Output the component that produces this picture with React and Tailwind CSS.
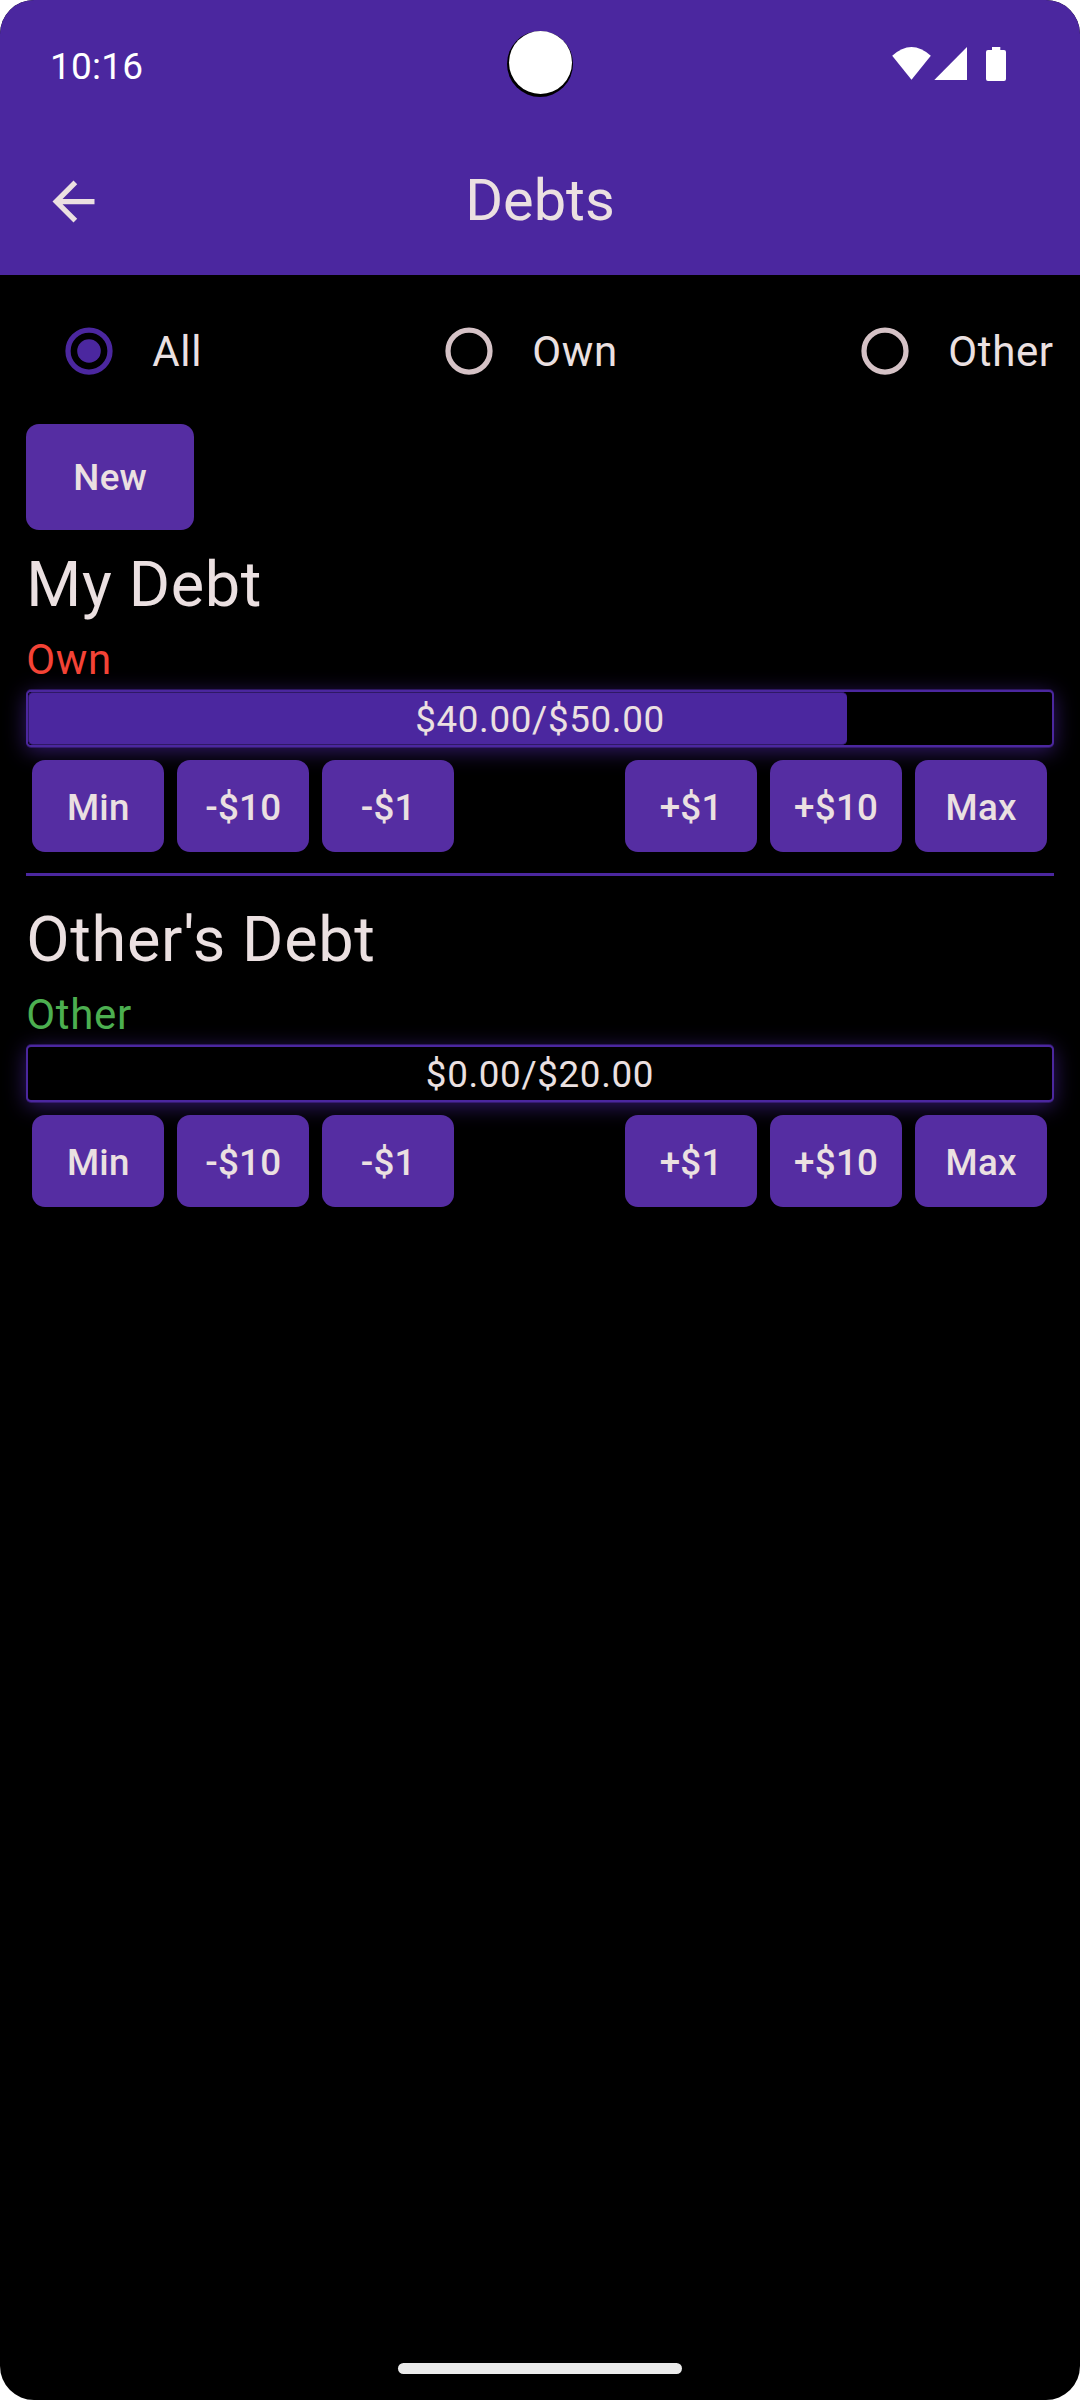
const DEBTS = [
  {
    title: "My Debt",
    kind: "Own",
    kindClass: "text-[#f44336]",
    label: "$40.00/$50.00",
    ratio: 0.8,
  },
  {
    title: "Other's Debt",
    kind: "Other",
    kindClass: "text-[#4caf50]",
    label: "$0.00/$20.00",
    ratio: 0,
  },
];

function StatusBar() {
  return (
    <div className="relative flex h-[128px] items-center justify-between pl-[50px] pr-[72px]">
      <span className="mt-[6px] text-[37px] leading-[44px] tracking-[0.2px] text-white">10:16</span>
      <svg className="h-[36px] w-[118px]" viewBox="890 46 118 36" fill="#fff">
        <path d="M892.2 55.8Q911.5 38.3 930.8 55.8L911.5 79.8Z" />
        <path d="M967 47V80H934.3Z" />
        <path d="M992 47H1000.3V50H1004a2 2 0 0 1 2 2V79a2 2 0 0 1-2 2H988a2 2 0 0 1-2-2V52a2 2 0 0 1 2-2H992Z" />
      </svg>
      <div className="absolute left-[507px] top-[31px] flex h-[66px] w-[66px] justify-center rounded-full bg-black">
        <div className="ml-[1px] h-[63px] w-[63px] rounded-full bg-white" />
      </div>
    </div>
  );
}

function AppBar() {
  return (
    <div className="grid h-[147px] grid-cols-[147px_1fr_147px] items-center">
      <button className="ml-[42px] h-[63px] w-[63px]" aria-label="Back">
        <svg viewBox="0 0 24 24" className="h-[63px] w-[63px]" fill="currentColor">
          <path d="M20 11H7.83l5.59-5.59L12 4l-8 8 8 8 1.41-1.41L7.83 13H20v-2z" />
        </svg>
      </button>
      <h1 className="mb-[2px] text-center text-[57.75px] leading-[73px]">Debts</h1>
    </div>
  );
}

function RadioOption({ label, selected }) {
  return (
    <div className="flex h-[126px] items-center">
      <div className="flex w-[126px] justify-center">
        <svg
          viewBox="0 0 48 48"
          className={selected ? "h-[48px] w-[48px] text-[#4b279f]" : "h-[48px] w-[48px] text-[#d5c2c6]"}
        >
          <circle cx="24" cy="24" r="21" fill="none" stroke="currentColor" strokeWidth="5.25" />
          {selected && <circle cx="24" cy="24" r="11.8" fill="currentColor" />}
        </svg>
      </div>
      <span className="text-[42px] leading-[63px] tracking-[0.66px]">{label}</span>
    </div>
  );
}

function StepButton({ children }) {
  return (
    <button className="h-[92px] w-[132px] rounded-[13px] bg-[#552da2] pt-[3px] text-[36.75px] font-medium leading-[52px] tracking-[0.26px]">
      {children}
    </button>
  );
}

function ProgressBar({ ratio, label }) {
  return (
    <div className="grid h-[57px] grid-cols-1 rounded-[5px] border-2 border-[#4b279f] bg-black shadow-[0_1px_0_rgba(75,39,160,0.5),0_-1px_0_rgba(75,39,160,0.5),0_4px_21px_rgba(75,39,160,0.65)]">
      {ratio > 0 && (
        <div
          className="col-start-1 row-start-1 h-full rounded-[5px] border-y border-l border-[#2f1966] bg-[#4b279f]"
          style={{ width: `${ratio * 100}%` }}
        />
      )}
      <span className="col-start-1 row-start-1 self-center pt-[3px] text-center text-[36.75px] leading-[50px] tracking-[0.66px]">
        {label}
      </span>
    </div>
  );
}

function Debt({ title, kind, kindClass, label, ratio }) {
  return (
    <section>
      <h2 className="text-[63px] leading-[84px] tracking-[0.66px]">{title}</h2>
      <p className={`h-[63px] text-[42px] leading-[65px] tracking-[0.66px] ${kindClass}`}>{kind}</p>
      <ProgressBar ratio={ratio} label={label} />
      <div className="mt-[13px] flex justify-between pl-[6px] pr-[6.6px]">
        <div className="flex gap-[13px]">
          <StepButton>Min</StepButton>
          <StepButton>-$10</StepButton>
          <StepButton>-$1</StepButton>
        </div>
        <div className="flex gap-[13px]">
          <StepButton>+$1</StepButton>
          <StepButton>+$10</StepButton>
          <StepButton>Max</StepButton>
        </div>
      </div>
    </section>
  );
}

export default function App() {
  return (
    <div className="h-[2400px] w-[1080px] bg-white">
      <div className="flex h-full w-full flex-col overflow-hidden rounded-[34px] bg-black font-['Roboto',sans-serif] text-[#ebe0e1]">
        <header className="bg-[#4b279f]">
          <StatusBar />
          <AppBar />
        </header>
        <main className="flex-1 px-[26.25px] pt-[13px]">
          <div className="flex justify-between">
            <RadioOption label="All" selected />
            <RadioOption label="Own" />
            <RadioOption label="Other" />
          </div>
          <button className="mt-[10px] mb-[13px] block h-[106px] w-[168px] rounded-[13px] bg-[#552da2] pt-px text-[36.75px] font-medium tracking-[0.26px]">
            New
          </button>
          <Debt {...DEBTS[0]} />
          <hr className="mt-[21px] mb-[22px] h-[3px] border-0 bg-[#4b279f]" />
          <Debt {...DEBTS[1]} />
        </main>
        <div className="flex h-[37px] justify-center">
          <div className="h-[11px] w-[284px] rounded-full bg-[#ebebeb]" />
        </div>
      </div>
    </div>
  );
}
